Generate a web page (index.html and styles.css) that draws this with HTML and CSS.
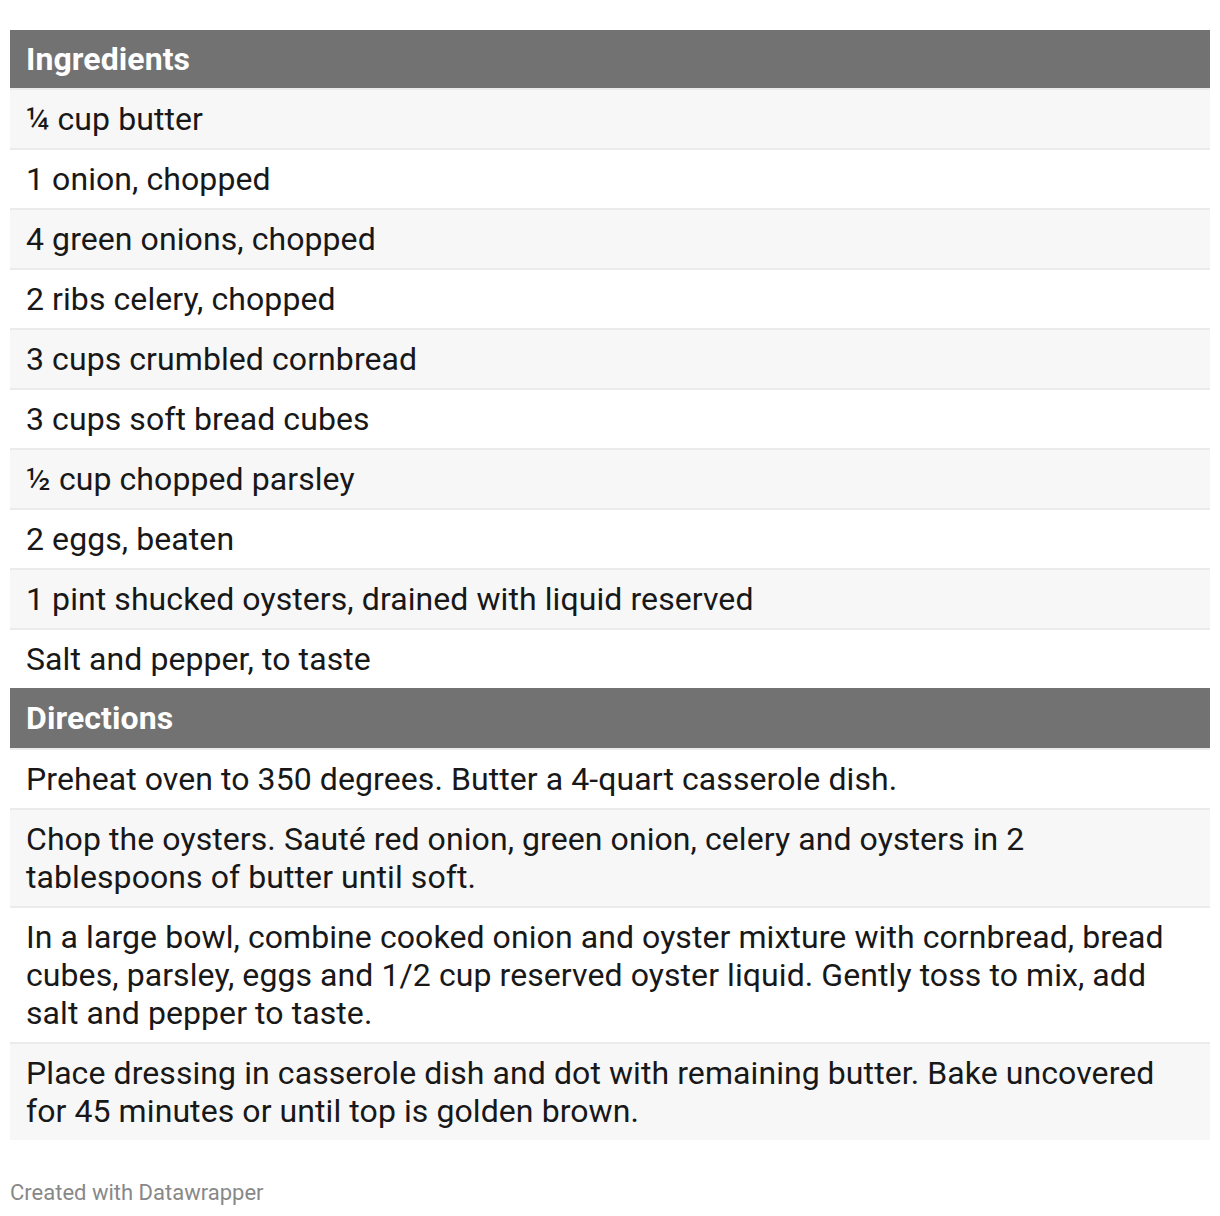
FILE: index.html
```html
<!DOCTYPE html>
<html>
<head>
<meta charset="utf-8">
<link rel="stylesheet" href="styles.css">
</head>
<body>
<div class="chart">
  <div class="table">
    <div class="row head">Ingredients</div>
    <div class="row odd">¼ cup butter</div>
    <div class="row">1 onion, chopped</div>
    <div class="row odd">4 green onions, chopped</div>
    <div class="row">2 ribs celery, chopped</div>
    <div class="row odd">3 cups crumbled cornbread</div>
    <div class="row">3 cups soft bread cubes</div>
    <div class="row odd">½ cup chopped parsley</div>
    <div class="row">2 eggs, beaten</div>
    <div class="row odd">1 pint shucked oysters, drained with liquid reserved</div>
    <div class="row noborder">Salt and pepper, to taste</div>
    <div class="row head head-mid">Directions</div>
    <div class="row">Preheat oven to 350 degrees. Butter a 4-quart casserole dish.</div>
    <div class="row odd">Chop the oysters. Sauté red onion, green onion, celery and oysters in 2 tablespoons of butter until soft.</div>
    <div class="row">In a large bowl, combine cooked onion and oyster mixture with cornbread, bread cubes, parsley, eggs and 1/2 cup reserved oyster liquid. Gently toss to mix, add salt and pepper to taste.</div>
    <div class="row odd noborder">Place dressing in casserole dish and dot with remaining butter. Bake uncovered for 45 minutes or until top is golden brown.</div>
  </div>
  <div class="footer">Created with Datawrapper</div>
</div>
</body>
</html>
```

FILE: styles.css
```css
html, body {
  margin: 0;
  padding: 0;
  background: #ffffff;
}
body {
  font-family: Roboto, "Liberation Sans", sans-serif;
  color: #181818;
}
.chart {
  padding: 30px 10px 0 10px;
}
.table {
  display: flex;
  flex-direction: column;
}
.row {
  font-size: 32px;
  line-height: 38px;
  letter-spacing: 0.08px;
  padding: 10px 40px 10px 16px;
  border-bottom: 2px solid #ebebeb;
  background: #ffffff;
}
.row.odd {
  background: #f7f7f7;
}
.row.noborder {
  border-bottom: none;
}
.row.head {
  background: #727272;
  color: #ffffff;
  font-weight: 700;
  border-bottom: 2px solid #ebebeb;
}
.row.head-mid {
  padding-top: 11px;
  padding-bottom: 11px;
}
.footer {
  margin-top: 38px;
  font-size: 22px;
  line-height: 30px;
  color: #888888;
}
```
